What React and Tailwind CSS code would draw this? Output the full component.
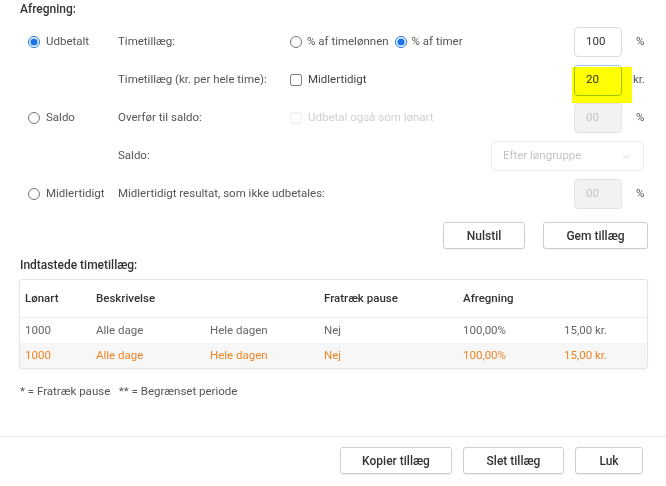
import React from "react";
import { ChevronDown } from "lucide-react";

const Radio = ({ checked, name }) => (
  <input
    type="radio"
    name={name}
    defaultChecked={checked}
    className="m-0 h-[12px] w-[12px] accent-[#1a73e8]"
  />
);

const Field = ({ value, disabled }) => (
  <div
    className={
      disabled
        ? "flex h-[30px] w-[48px] items-center rounded-[4px] border border-[#e3e3e3] bg-[#f2f2f2] pl-[11px] text-[#c4c4c4]"
        : "flex h-[30px] w-[48px] items-center rounded-[4px] border border-[#dcdcdc] bg-white pl-[11px] text-[#333]"
    }
  >
    {value}
  </div>
);

const Btn = ({ children, w }) => (
  <button
    className={`h-[27px] ${w} rounded-[3px] border border-[#cfcfcf] bg-white text-[12px] font-medium text-[#333] shadow-[0_1px_1px_rgba(0,0,0,0.06)]`}
  >
    {children}
  </button>
);

export default function App() {
  // rows in the table
  const rows = [
    { id: 1, lonart: "1000", besk: "Alle dage", tid: "Hele dagen", pause: "Nej", pct: "100,00%", kr: "15,00 kr.", active: false },
    { id: 2, lonart: "1000", besk: "Alle dage", tid: "Hele dagen", pause: "Nej", pct: "100,00%", kr: "15,00 kr.", active: true },
  ];

  return (
    <div
      className="flex h-[486px] w-[666px] flex-col overflow-hidden bg-white text-[11.5px] text-[#555]"
      style={{ fontFamily: "Roboto, 'Liberation Sans', sans-serif" }}
    >
      <div className="px-[20px]">
        <div className="h-[18px] text-[12px] leading-[18px] font-medium text-[#333]">Afregning:</div>

        <div className="mt-[9px] flex flex-col gap-[8px]">
          {/* Udbetalt */}
          <div className="flex h-[30px] items-center">
            <div className="flex w-[98px] items-center gap-[6px] pl-[8px]">
              <Radio name="afr" checked />
              <span>Udbetalt</span>
            </div>
            <div className="w-[172px]">Timetillæg:</div>
            <div className="flex w-[284px] items-center">
              <Radio name="type" />
              <span className="ml-[5px] mr-[6px]">% af timelønnen</span>
              <Radio name="type" checked />
              <span className="ml-[5px]">% af timer</span>
            </div>
            <Field value="100" />
            <span className="ml-[14px]">%</span>
          </div>

          {/* kr per time */}
          <div className="flex h-[30px] items-center">
            <div className="w-[98px]" />
            <div className="w-[172px]">Timetillæg (kr. per hele time):</div>
            <div className="flex w-[284px] items-center">
              <input type="checkbox" className="m-0 h-[12px] w-[12px]" />
              <span className="ml-[6px] text-[#444]">Midlertidigt</span>
            </div>
            <div className="relative">
              <div className="flex h-[31px] w-[48px] items-center rounded-[4px] border border-[#9ec3e6] bg-white pl-[11px] text-[#333]">
                20
              </div>
              <div className="pointer-events-none absolute left-[-2px] top-[2px] h-[36px] w-[60px] bg-[#ffff00] mix-blend-multiply" />
            </div>
            <span className="ml-[11px]">kr.</span>
          </div>

          {/* Saldo */}
          <div className="flex h-[30px] items-center">
            <div className="flex w-[98px] items-center gap-[6px] pl-[8px]">
              <Radio name="afr" />
              <span>Saldo</span>
            </div>
            <div className="w-[172px]">Overfør til saldo:</div>
            <div className="flex w-[284px] items-center text-[#cfcfcf]">
              <input type="checkbox" disabled className="m-0 h-[12px] w-[12px] opacity-40" />
              <span className="ml-[6px]">Udbetal også som lønart</span>
            </div>
            <Field value="00" disabled />
            <span className="ml-[14px]">%</span>
          </div>

          {/* Saldo select */}
          <div className="flex h-[30px] items-center">
            <div className="w-[98px]" />
            <div className="w-[172px]">Saldo:</div>
            <div className="w-[201px]" />
            <div className="flex h-[30px] w-[153px] items-center justify-between rounded-[4px] border border-[#ececec] bg-white pl-[11px] pr-[10px] text-[#c4c4c4]">
              <span>Efter løngruppe</span>
              <ChevronDown size={13} strokeWidth={1.5} className="text-[#cfcfcf]" />
            </div>
          </div>

          {/* Midlertidigt */}
          <div className="flex h-[30px] items-center">
            <div className="flex w-[98px] items-center gap-[6px] pl-[8px]">
              <Radio name="afr" />
              <span>Midlertidigt</span>
            </div>
            <div className="w-[456px]">Midlertidigt resultat, som ikke udbetales:</div>
            <Field value="00" disabled />
            <span className="ml-[14px]">%</span>
          </div>
        </div>

        <div className="mr-[-2px] mt-[13px] flex justify-end gap-[18px]">
          <Btn w="w-[82px]">Nulstil</Btn>
          <Btn w="w-[105px]">Gem tillæg</Btn>
        </div>

        <div className="mt-[8px] h-[16px] text-[12px] leading-[16px] font-medium text-[#333]">Indtastede timetillæg:</div>

        <div className="ml-[-1px] mt-[6px] w-[629px] overflow-hidden rounded-[3px] border border-[#e4e4e4] shadow-[0_1px_2px_rgba(0,0,0,0.05)]">
          <div className="grid h-[38px] grid-cols-[71px_114px_114px_139px_101px_1fr] items-center border-b border-[#efefef] pl-[5px] font-medium text-[#333]">
            <div>Lønart</div>
            <div>Beskrivelse</div>
            <div />
            <div>Fratræk pause</div>
            <div>Afregning</div>
            <div />
          </div>
          {rows.map((r) => (
            <div
              key={r.id}
              className={
                r.active
                  ? "grid h-[25px] grid-cols-[71px_114px_114px_139px_101px_1fr] items-center bg-[#f7f7f7] pl-[5px] text-[#ef8426]"
                  : "grid h-[25px] grid-cols-[71px_114px_114px_139px_101px_1fr] items-center pl-[5px] text-[#666]"
              }
            >
              <div>{r.lonart}</div>
              <div>{r.besk}</div>
              <div>{r.tid}</div>
              <div>{r.pause}</div>
              <div>{r.pct}</div>
              <div>{r.kr}</div>
            </div>
          ))}
        </div>

        <div className="mt-[14px] text-[11.5px] text-[#555]">
          * = Fratræk pause&nbsp;&nbsp;&nbsp;** = Begrænset periode
        </div>
      </div>

      <div className="mt-auto flex h-[50px] items-start justify-end gap-[11px] border-t border-[#e6e6e6] pr-[23px] pt-[10px]">
        <Btn w="w-[112px]">Kopier tillæg</Btn>
        <Btn w="w-[101px]">Slet tillæg</Btn>
        <Btn w="w-[68px]">Luk</Btn>
      </div>
    </div>
  );
}
